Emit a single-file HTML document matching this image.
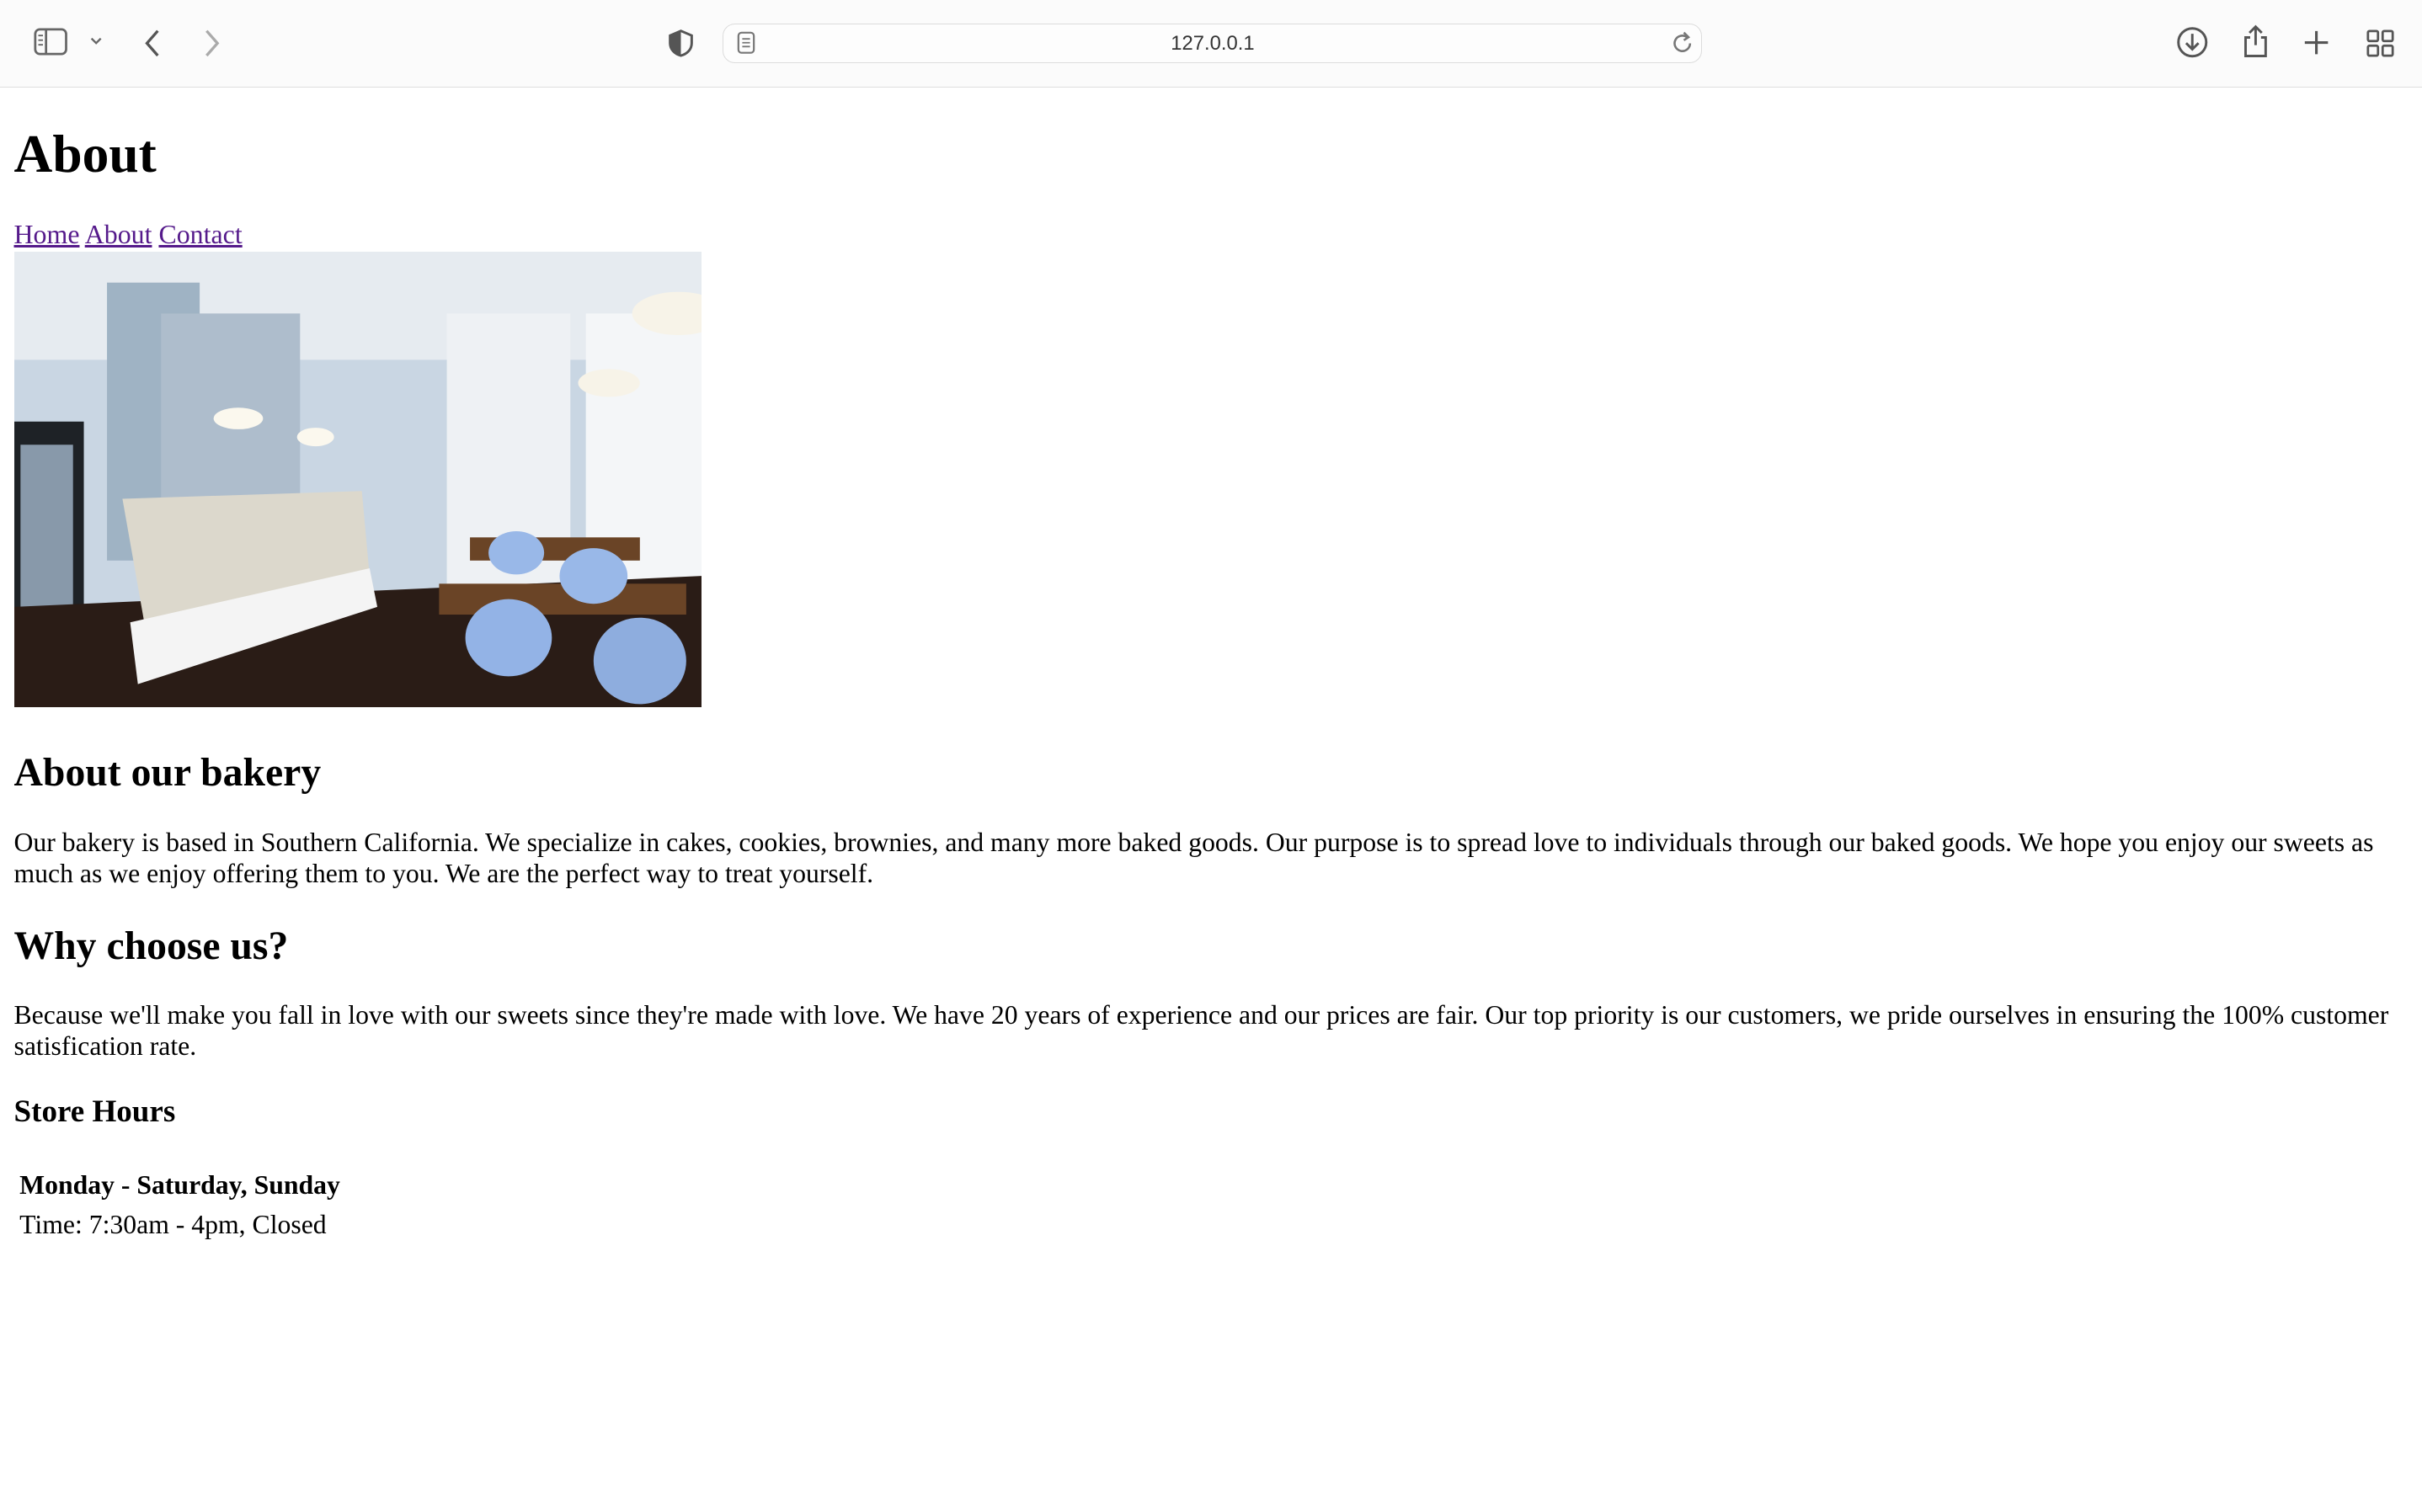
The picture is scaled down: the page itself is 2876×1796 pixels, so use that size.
<!DOCTYPE html>
<html><head><meta charset="utf-8"><style>
html,body{margin:0;padding:0;background:#fff;}
#z{zoom:1.8342;width:1568px;height:979px;position:relative;overflow:hidden;font-family:"Liberation Serif",serif;}
#tb{position:absolute;left:0;top:0;width:1568px;height:56px;background:#fbfbfb;border-bottom:1px solid #dedede;}
#tb svg{position:absolute;}
#url{position:absolute;left:468px;top:15px;width:633px;height:25px;border:1px solid #dcdcdc;border-radius:8px;background:#fdfdfd;font-family:"Liberation Sans",sans-serif;font-size:13px;color:#333;text-align:center;line-height:25px;}
#pg{position:absolute;left:0;top:57px;width:1568px;}
.c{margin:0 9px;}
h1{font-size:34.6px;margin:24px 0 25px;line-height:37px;}
nav{font-size:17.4px;line-height:18px;margin-top:2px;}
nav a{color:#551a8b;}
svg.ph{display:block;margin-top:2px;}
h2{font-size:26px;margin:28px 0 0;line-height:30px;}
p{font-size:17.3px;line-height:20px;margin:20px 0 0;}
h3{font-size:20.2px;margin:21px 0 0;line-height:23px;}
table{font-size:17.3px;border-spacing:2px;margin-left:1px;margin-top:22px;}
td{padding:0 1px;line-height:24px;}
</style></head><body><div id="z">
<div id="tb">
<svg style="left:22px;top:18px" width="22" height="18" viewBox="0 0 22 18"><rect x="1" y="1" width="20" height="16" rx="3" fill="none" stroke="#666" stroke-width="1.5"/><line x1="8" y1="1" x2="8" y2="17" stroke="#666" stroke-width="1.5"/><path d="M3 5h3M3 8h3M3 11h3" stroke="#666"/></svg>
<svg style="left:57px;top:23px" width="10" height="8"><path d="M2 2l3 3 3-3" fill="none" stroke="#666" stroke-width="1.3"/></svg>
<svg style="left:92px;top:18px" width="14" height="20"><path d="M10 2L3 10l7 8" fill="none" stroke="#555" stroke-width="1.8"/></svg>
<svg style="left:130px;top:18px" width="14" height="20"><path d="M4 2l7 8-7 8" fill="none" stroke="#aaa" stroke-width="1.8"/></svg>
<svg style="left:432px;top:18px" width="18" height="20"><path d="M9 2L2 5v5c0 4 3 7 7 8 4-1 7-4 7-8V5z" fill="none" stroke="#555" stroke-width="1.6"/><path d="M9 2v16c-4-1-7-4-7-8V5z" fill="#555"/></svg>
<div id="url">127.0.0.1</div>
<svg style="left:477px;top:20px" width="12" height="15"><rect x="1" y="1" width="10" height="13" rx="2" fill="none" stroke="#777" stroke-width="1.2"/><path d="M3.5 5h5M3.5 7.5h5M3.5 10h5" stroke="#777"/></svg>
<svg style="left:1081px;top:19px" width="16" height="17"><path d="M13 9a5 5 0 1 1-2-4" fill="none" stroke="#777" stroke-width="1.4"/><path d="M9 2l3 3-3 2" fill="none" stroke="#777" stroke-width="1.4"/></svg>
<svg style="left:1409px;top:17px" width="21" height="21"><circle cx="10.5" cy="10.5" r="9" fill="none" stroke="#555" stroke-width="1.6"/><path d="M10.5 5v10M6.5 11l4 4 4-4" fill="none" stroke="#555" stroke-width="1.6"/></svg>
<svg style="left:1451px;top:15px" width="19" height="23"><path d="M6 9H3v12h13V9h-3" fill="none" stroke="#555" stroke-width="1.6"/><path d="M9.5 14V2M5.5 6l4-4 4 4" fill="none" stroke="#555" stroke-width="1.6"/></svg>
<svg style="left:1491px;top:19px" width="17" height="17"><path d="M8.5 1v15M1 8.5h15" stroke="#555" stroke-width="1.7"/></svg>
<svg style="left:1532px;top:19px" width="18" height="18"><g fill="none" stroke="#555" stroke-width="1.5"><rect x="1" y="1" width="6.5" height="6.5" rx="1"/><rect x="10.5" y="1" width="6.5" height="6.5" rx="1"/><rect x="1" y="10.5" width="6.5" height="6.5" rx="1"/><rect x="10.5" y="10.5" width="6.5" height="6.5" rx="1"/></g></svg>
</div>
<div id="pg"><div class="c">
<h1>About</h1>
<nav><a href="#">Home</a> <a href="#">About</a> <a href="#">Contact</a></nav>
<svg class="ph" width="445" height="295" viewBox="0 0 445 295">
<rect width="445" height="295" fill="#c9d6e3"/>
<rect x="0" y="0" width="445" height="70" fill="#e6ebf0"/>
<rect x="60" y="20" width="60" height="180" fill="#9fb3c4"/>
<rect x="95" y="40" width="90" height="140" fill="#aebdcc"/>
<rect x="280" y="40" width="80" height="180" fill="#eef1f4"/>
<rect x="370" y="40" width="75" height="200" fill="#f4f6f8"/>
<rect x="0" y="110" width="45" height="185" fill="#1e2226"/>
<rect x="4" y="125" width="34" height="110" fill="#8899aa"/>
<polygon points="0,230 445,210 445,295 0,295" fill="#2a1c16"/>
<polygon points="70,160 225,155 230,210 85,245" fill="#dcd8cc"/>
<polygon points="75,240 230,205 235,230 80,280" fill="#f4f4f4"/>
<rect x="275" y="215" width="160" height="20" fill="#6a4426"/>
<rect x="295" y="185" width="110" height="15" fill="#6a4426"/>
<ellipse cx="320" cy="250" rx="28" ry="25" fill="#93b3e6"/>
<ellipse cx="405" cy="265" rx="30" ry="28" fill="#8eadde"/>
<ellipse cx="375" cy="210" rx="22" ry="18" fill="#99b8e8"/>
<ellipse cx="325" cy="195" rx="18" ry="14" fill="#99b8e8"/>
<ellipse cx="430" cy="40" rx="30" ry="14" fill="#f7f3e8"/>
<ellipse cx="385" cy="85" rx="20" ry="9" fill="#f7f3e8"/>
<ellipse cx="145" cy="108" rx="16" ry="7" fill="#fbf8ee"/>
<ellipse cx="195" cy="120" rx="12" ry="6" fill="#fbf8ee"/>
</svg>
<h2>About our bakery</h2>
<p>Our bakery is based in Southern California. We specialize in cakes, cookies, brownies, and many more baked goods. Our purpose is to spread love to individuals through our baked goods. We hope you enjoy our sweets as much as we enjoy offering them to you. We are the perfect way to treat yourself.</p>
<h2 style="margin-top:22px">Why choose us?</h2>
<p>Because we'll make you fall in love with our sweets since they're made with love. We have 20 years of experience and our prices are fair. Our top priority is our customers, we pride ourselves in ensuring the 100% customer satisfication rate.</p>
<h3>Store Hours</h3>
<table><tr><td><b>Monday - Saturday, Sunday</b></td></tr><tr><td>Time: 7:30am - 4pm, Closed</td></tr></table>
</div></div>
</div></body></html>
